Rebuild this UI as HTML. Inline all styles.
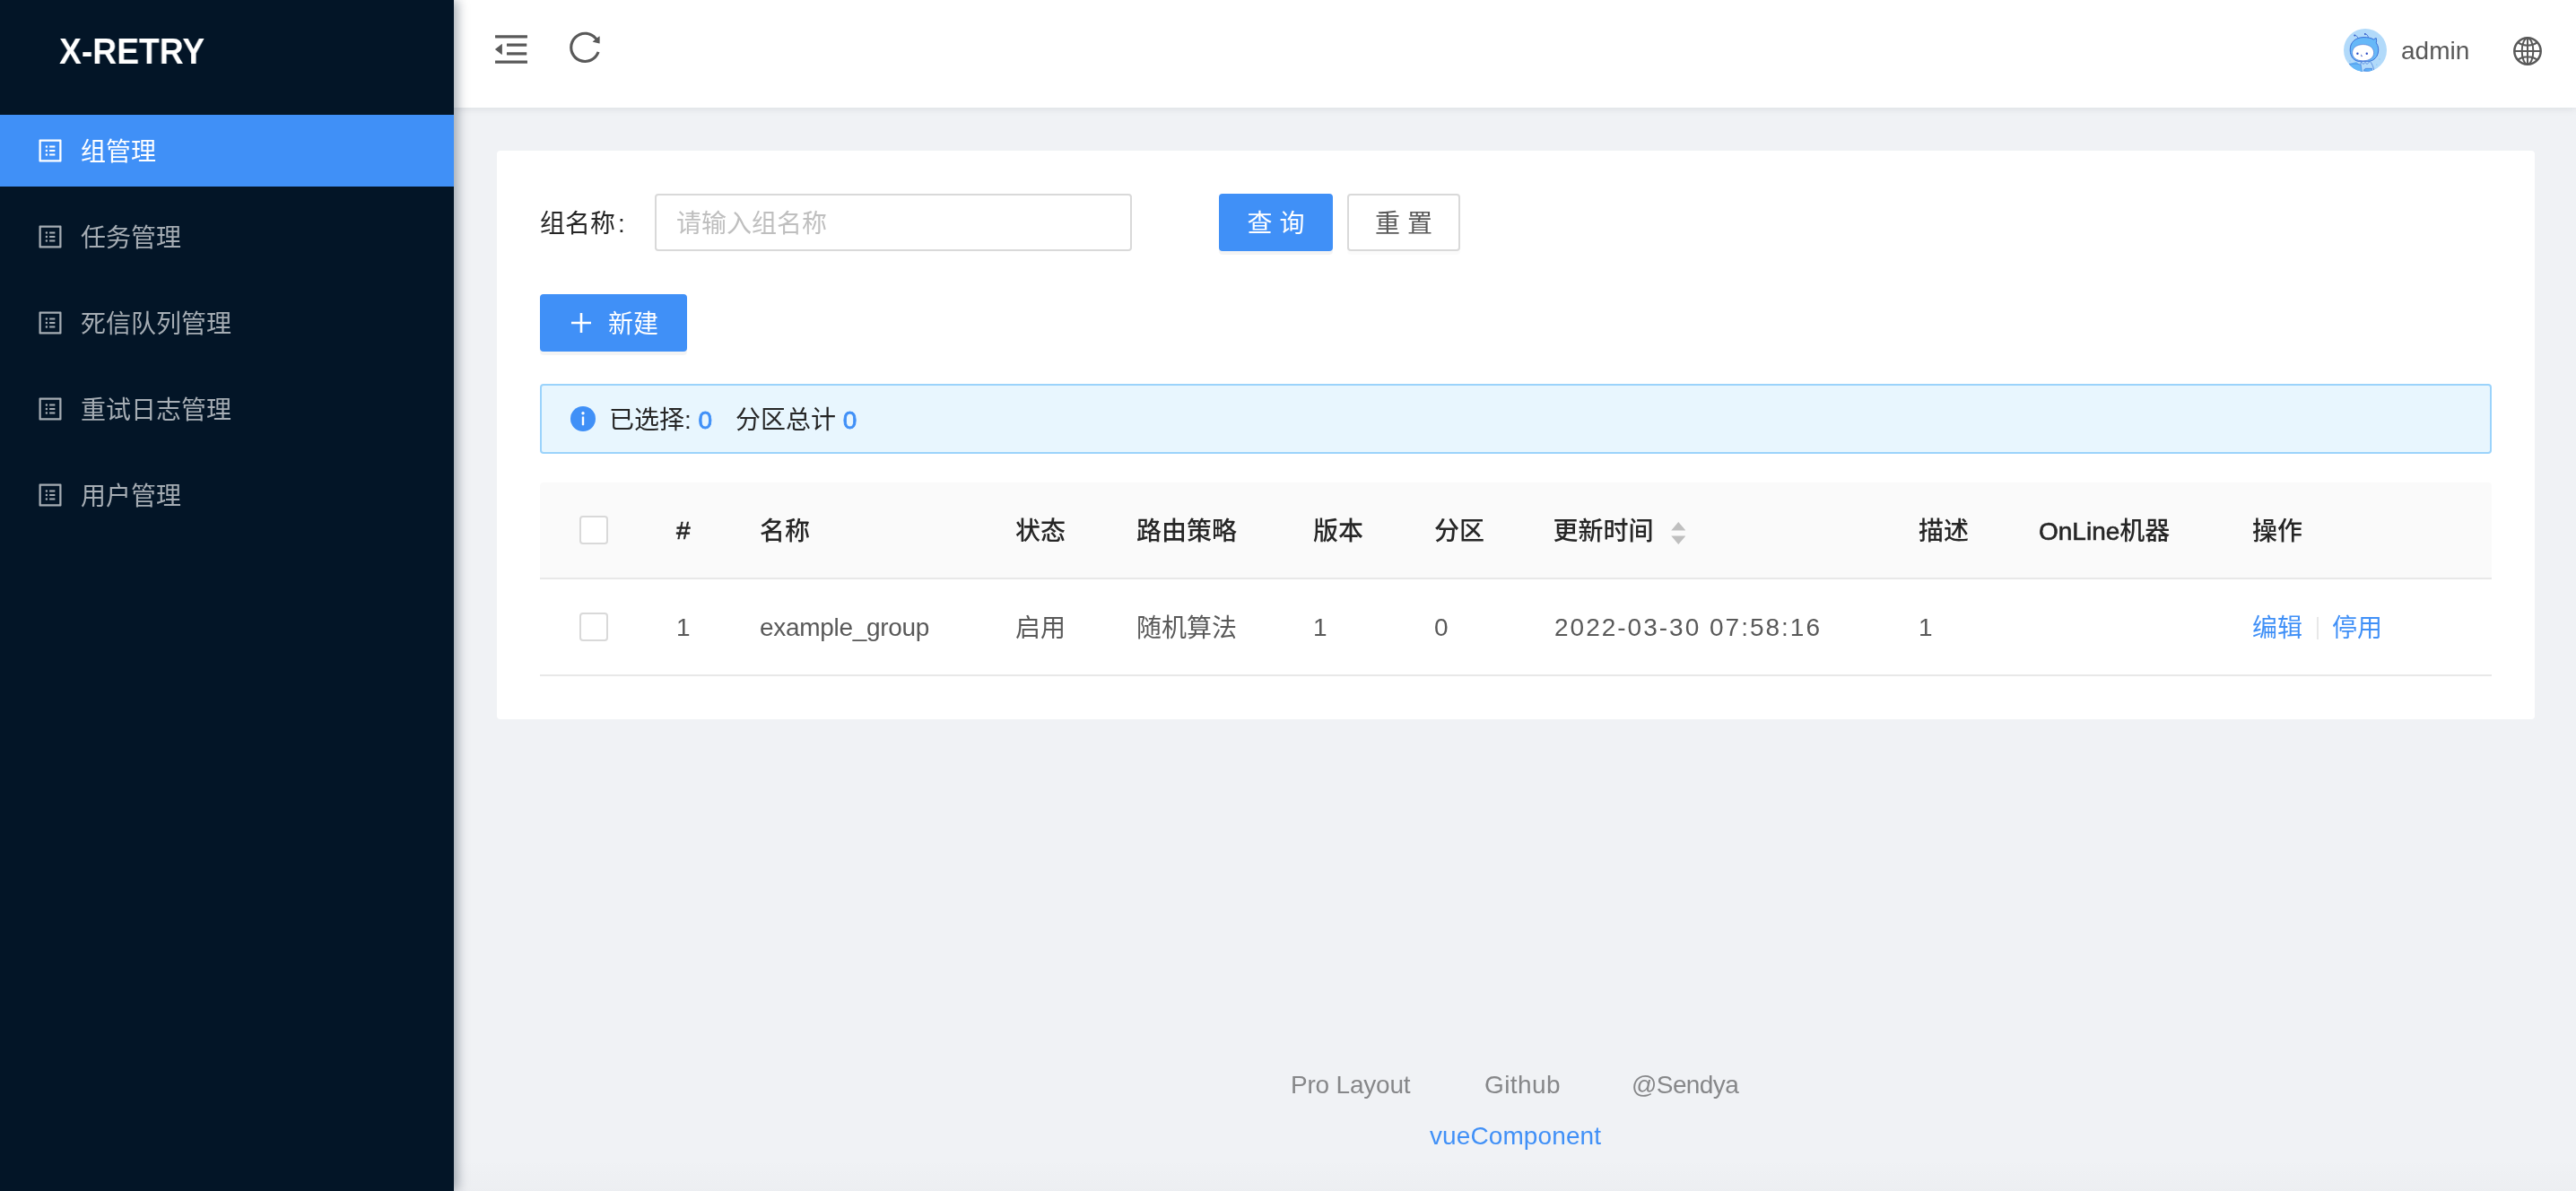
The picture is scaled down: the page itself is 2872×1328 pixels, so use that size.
<!DOCTYPE html>
<html lang="zh-CN">
<head>
<meta charset="utf-8">
<title>X-RETRY</title>
<style>
*{box-sizing:border-box;margin:0;padding:0}
html,body{width:2872px;height:1328px;overflow:hidden}
body{position:relative;background:#f0f2f5;font-family:"Liberation Sans","Noto Sans CJK SC",sans-serif;font-size:28px;color:#595959;line-height:44px}
a{text-decoration:none;color:#4090f7}
svg{display:block}
.abs{position:absolute}

/* sidebar */
.sider{position:absolute;left:0;top:0;width:506px;height:1328px;background:#031527;box-shadow:4px 0 12px rgba(0,21,41,.35);z-index:10}
.logo{position:absolute;left:66px;top:28.5px;height:56px;line-height:56px;font-size:40px;font-weight:700;color:#fff;white-space:nowrap;transform:scaleX(.931);transform-origin:0 50%}
.menu{position:absolute;left:0;top:128px;width:506px;list-style:none}
.menu li{position:relative;height:80px;margin-bottom:16px;line-height:80px;color:#a6adb4;white-space:nowrap}
.menu li.on{background:#4090f7;color:#fff}
.menu li svg{position:absolute;left:40px;top:24px;width:32px;height:32px;fill:currentColor}
.menu li span{position:absolute;left:90px;top:2px}

/* header */
.header{position:absolute;left:506px;top:0;width:2366px;height:120px;background:#fff;box-shadow:0 2px 8px rgba(0,21,41,.08);z-index:5}
.header svg{position:absolute;fill:#595959}
.uname{position:absolute;left:2171px;top:35px;line-height:44px;color:#595959;white-space:nowrap}

/* card */
.card{position:absolute;left:554px;top:168px;width:2272px;height:634px;background:#fff;border-radius:4px}
.lbl{position:absolute;left:48px;top:60px;line-height:44px;color:#262626;white-space:nowrap}
.lbl i{font-style:normal;margin-left:3px}
.ipt{position:absolute;left:176px;top:48px;width:532px;height:64px;border:2px solid #d9d9d9;border-radius:4px;background:#fff;padding:3px 22px 0;line-height:57px;color:#bfbfbf;white-space:nowrap}
.btn{position:absolute;height:64px;border-radius:4px;padding-top:3px;line-height:57px;text-align:center;white-space:nowrap;border:2px solid #d9d9d9;background:#fff;color:#595959;box-shadow:0 4px 0 rgba(0,0,0,.015)}
.btn.pri{background:#4090f7;border-color:#4090f7;color:#fff;box-shadow:0 4px 0 rgba(0,0,0,.045)}
.alert{position:absolute;left:48px;top:260px;width:2176px;height:78px;border:2px solid #9bd3fb;background:#e8f6fe;border-radius:4px;color:#262626;white-space:nowrap}
.alert svg{position:absolute;left:32px;top:23px}
.alert .t{position:absolute;top:17px;line-height:44px}
.alert a{font-weight:400;-webkit-text-stroke:.8px #4090f7}

/* table */
.tbl{position:absolute;left:48px;top:370px;width:2176px;border-collapse:separate;border-spacing:0;table-layout:fixed}
.tbl th,.tbl td{height:108px;padding:4px 32px 0;text-align:left;vertical-align:middle;border-bottom:2px solid #e8e8e8;white-space:nowrap;font-weight:400}
.tbl th{background:#fafafa;color:#262626;font-weight:500}
.tbl th b{font-weight:400;-webkit-text-stroke:.6px #262626}
.tbl th:first-child{border-top-left-radius:4px}
.tbl th:last-child{border-top-right-radius:4px}
.tbl td{color:#595959}
.tbl .c{padding-top:0}
.tbl .l{padding-top:2px}
.cb{display:block;width:32px;height:32px;border:2px solid #d9d9d9;border-radius:4px;background:#fff;margin-left:12px}
.sorter{display:inline-block;vertical-align:middle;margin-left:19px;margin-top:-1px}
.dvd{display:inline-block;width:2px;height:25px;background:#e8e8e8;vertical-align:middle;margin:0 15px 0 16px;position:relative;top:-2px}

/* footer */
.footer{position:absolute;left:506px;top:1188px;width:2366px;height:120px;color:#868789;white-space:nowrap}
.footer span,.footer a{position:absolute;line-height:44px}
/* force grayscale text antialiasing */
.uname,.tbl,.footer span,.footer a,.lbl,.ipt,.btn,.alert,.logo,.menu li span{will-change:transform}
</style>
</head>
<body>

<div class="sider">
  <div class="logo">X-RETRY</div>
  <ul class="menu">
    <li class="on"><svg viewBox="0 0 1024 1024"><use href="#i-profile"/></svg><span>组管理</span></li>
    <li><svg viewBox="0 0 1024 1024"><use href="#i-profile"/></svg><span>任务管理</span></li>
    <li><svg viewBox="0 0 1024 1024"><use href="#i-profile"/></svg><span>死信队列管理</span></li>
    <li><svg viewBox="0 0 1024 1024"><use href="#i-profile"/></svg><span>重试日志管理</span></li>
    <li><svg viewBox="0 0 1024 1024"><use href="#i-profile"/></svg><span>用户管理</span></li>
  </ul>
</div>

<div class="header">
  <svg viewBox="0 0 1024 1024" style="left:41px;top:32px;width:46px;height:46px"><path d="M408 442h480c4.400 0 8-3.600 8-8v-56c0-4.400-3.600-8-8-8H408c-4.400 0-8 3.600-8 8v56c0 4.400 3.600 8 8 8zm-8 204c0 4.400 3.600 8 8 8h480c4.400 0 8-3.600 8-8v-56c0-4.400-3.600-8-8-8H408c-4.400 0-8 3.600-8 8v56zm504-486H120c-4.400 0-8 3.600-8 8v56c0 4.400 3.600 8 8 8h784c4.400 0 8-3.600 8-8v-56c0-4.400-3.600-8-8-8zm0 632H120c-4.400 0-8 3.600-8 8v56c0 4.400 3.600 8 8 8h784c4.400 0 8-3.600 8-8v-56c0-4.400-3.600-8-8-8zM115.400 518.900L271.700 642c5.800 4.600 14.400.5 14.400-6.900V388.900c0-7.400-8.500-11.500-14.400-6.900L115.400 505.100a8.740 8.740 0 0 0 0 13.800z"/></svg>
  <svg viewBox="0 0 1024 1024" style="left:125px;top:32.400px;width:41.800px;height:41.800px"><path d="M909.100 209.300l-56.400 44.100C775.800 155.100 656.200 92 521.900 92 290 92 102.300 279.500 102 511.500 101.700 743.700 289.800 932 521.900 932c181.300 0 335.800-115 394.600-276.100 1.500-4.200-.7-8.900-4.900-10.300l-56.700-19.500a8 8 0 0 0-10.100 4.800c-1.800 5-3.800 10-5.900 14.900-17.300 41-42.100 77.800-73.700 109.400A344.770 344.770 0 0 1 655.900 829c-42.300 17.900-87.400 27-133.800 27-46.500 0-91.500-9.100-133.800-27A341.500 341.500 0 0 1 279 755.200a342.160 342.160 0 0 1-73.700-109.400c-17.900-42.400-27-87.400-27-133.900s9.100-91.500 27-133.900c17.300-41 42.100-77.800 73.700-109.400 31.600-31.600 68.400-56.400 109.300-73.800 42.300-17.900 87.400-27 133.800-27 46.500 0 91.500 9.100 133.800 27a341.500 341.500 0 0 1 109.300 73.800c9.900 9.900 19.200 20.400 27.800 31.400l-60.200 47a8 8 0 0 0 3 14.100l175.600 43c5 1.200 9.900-2.600 9.900-7.700l.8-180.900c-.1-6.600-7.800-10.300-13-6.200z"/></svg>
  <svg viewBox="0 0 48 48" style="left:2107px;top:32px;width:48px;height:48px">
    <defs><clipPath id="avc"><circle cx="24" cy="24" r="24"/></clipPath></defs>
    <g clip-path="url(#avc)">
      <rect width="48" height="48" fill="#b2dafa"/>
      <path d="M16.300 11.500C15.600 8.500 14 7.300 12.200 7.400M27.600 10.600C27.300 7.400 25.800 5.900 23.700 5.900" fill="none" stroke="#3f6fd6" stroke-width="0.900" stroke-linecap="round"/>
      <circle cx="12.300" cy="7.500" r="0.900" fill="#2f55c8"/><circle cx="23.800" cy="5.900" r="0.900" fill="#2f55c8"/>
      <path d="M7.200 24C7 15 13 9.800 22 9.600c4.500-.1 8.500.6 11.500 2.400 1-.9 2-1.400 2.800-1.400 .4 2 .4 3.600 0 5.200C38.600 19.300 39.300 23 38.300 27c-1 4.500-4 8-9.300 9.300H16C10.500 35 7.400 30.500 7.200 24z" fill="#66b8f8" stroke="#3b6fd6" stroke-width="1"/>
      <path d="M14 37l-8 2.200L14 48h14z" fill="#66b8f8"/>
      <path d="M19.500 36.500c-1 4-1 8 .5 12h14c-.5-5-2-9-4.500-12z" fill="#b2dafa" stroke="#3f74d8" stroke-width="0.700"/>
      <path d="M19.500 37l2.500 2.600 2-2.200 2 2.200 2.600-2.600" fill="none" stroke="#3f74d8" stroke-width="0.700"/>
      <path d="M6 39.200h9l4 1 1.500 7.800H13z" fill="#66b8f8" stroke="#3f74d8" stroke-width="0.500"/>
      <path d="M22.500 47c.3-1.800 1.200-2.600 2.500-2.700h6.500v3.700z" fill="#5aaef6" stroke="#3f74d8" stroke-width="0.600"/>
      <path d="M21.600 17.600c7.200 0 12 3.800 12 9.200 0 5.600-4.800 9-12 9s-12-3.400-12-9c0-5.400 4.800-9.200 12-9.200z" fill="#fff" stroke="#4a78d6" stroke-width="0.700"/>
      <circle cx="15.400" cy="27.700" r="1.200" fill="#2e4fc6"/><circle cx="25.800" cy="27.700" r="1.200" fill="#2e4fc6"/>
      <path d="M19.600 28.800v1.800h1.400" fill="none" stroke="#2e4fc6" stroke-width="0.700"/>
      <circle cx="7" cy="36" r="0.800" fill="#8ccbfa"/><circle cx="40" cy="34" r="0.800" fill="#8ccbfa"/><circle cx="36.800" cy="40.300" r="0.800" fill="#8ccbfa"/>
    </g>
  </svg>
  <svg viewBox="0 0 36 36" style="left:2294px;top:39px;width:36px;height:36px;fill:none;stroke:#595959;stroke-width:2">
    <circle cx="18" cy="18" r="14.700" stroke-width="2.500"/>
    <ellipse cx="18" cy="18" rx="6.300" ry="14.600"/>
    <path d="M18 3.400v29.200M3.400 18h29.200M7.200 8.400c6.400 4.400 15.200 4.400 21.600 0M7.200 27.600c6.400-4.400 15.200-4.400 21.600 0"/>
  </svg>
  <span class="uname">admin</span>
</div>

<div class="card">
  <span class="lbl">组名称<i>:</i></span>
  <div class="ipt">请输入组名称</div>
  <div class="btn pri" style="left:805px;top:48px;width:127px">查 询</div>
  <div class="btn" style="left:948px;top:48px;width:126px">重 置</div>
  <div class="btn pri" style="left:48px;top:160px;width:164px;text-align:left"><svg viewBox="0 0 22 22" width="22" height="22" style="position:absolute;left:33px;top:19px"><path d="M11 0v22M0 11h22" stroke="#fff" stroke-width="2.600" fill="none"/></svg><span style="position:absolute;left:74px">新建</span></div>
  <div class="alert">
    <svg viewBox="0 0 28 28" width="28" height="28"><circle cx="14" cy="14" r="14" fill="#4090f7"/><circle cx="14" cy="7.800" r="1.700" fill="#fff"/><rect x="12.800" y="11.400" width="2.400" height="9.800" rx="0.400" fill="#fff"/></svg>
    <span class="t" style="left:75px">已选择: <a>0</a></span>
    <span class="t" style="left:216px">分区总计 <a>0</a></span>
  </div>
  <table class="tbl">
    <colgroup><col style="width:120px"><col style="width:93px"><col style="width:285px"><col style="width:135px"><col style="width:197px"><col style="width:135px"><col style="width:134px"><col style="width:406px"><col style="width:134px"><col style="width:238px"><col style="width:299px"></colgroup>
    <thead><tr>
      <th class="c"><i class="cb"></i></th><th class="l"><b>#</b></th><th>名称</th><th>状态</th><th>路由策略</th><th>版本</th><th>分区</th>
      <th style="text-indent:-1.500px">更新时间<svg class="sorter" viewBox="0 0 16.500 25" width="16.500" height="25"><path d="M8.250 0l8 9.400H.25zM8.250 25L.25 15.600h16z" fill="#bfbfbf"/></svg></th>
      <th>描述</th><th><b>OnLine</b>机器</th><th>操作</th>
    </tr></thead>
    <tbody><tr>
      <td class="c"><i class="cb"></i></td><td class="l">1</td><td class="l" style="letter-spacing:-0.3px">example_group</td><td>启用</td><td>随机算法</td><td class="l">1</td><td class="l">0</td><td class="l" style="letter-spacing:2px">2022-03-30 07:58:16</td><td class="l">1</td><td></td>
      <td><a>编辑</a><i class="dvd"></i><a>停用</a></td>
    </tr></tbody>
  </table>
</div>

<div class="abs" style="left:506px;top:1292px;width:2366px;height:36px;background:linear-gradient(rgba(0,0,20,0),rgba(0,0,20,.014))"></div>

<div class="footer">
  <span style="left:933px;top:0;letter-spacing:-0.2px">Pro Layout</span><span style="left:1148.500px;top:0;letter-spacing:0.4px">Github</span><span style="left:1313px;top:0;letter-spacing:-0.6px">@Sendya</span>
  <a style="left:1088px;top:57px;letter-spacing:0.1px">vueComponent</a>
</div>

<svg width="0" height="0" style="position:absolute">
  <defs>
    <path id="i-profile" d="M880 112H144c-17.700 0-32 14.300-32 32v736c0 17.700 14.300 32 32 32h736c17.700 0 32-14.300 32-32V144c0-17.700-14.300-32-32-32zm-40 728H184V184h656v656zM492 400h184c4.400 0 8-3.600 8-8v-48c0-4.400-3.600-8-8-8H492c-4.400 0-8 3.600-8 8v48c0 4.400 3.600 8 8 8zm0 144h184c4.400 0 8-3.600 8-8v-48c0-4.400-3.600-8-8-8H492c-4.400 0-8 3.600-8 8v48c0 4.400 3.600 8 8 8zm0 144h184c4.400 0 8-3.600 8-8v-48c0-4.400-3.600-8-8-8H492c-4.400 0-8 3.600-8 8v48c0 4.400 3.600 8 8 8zM340 368a40 40 0 1 0 80 0 40 40 0 1 0-80 0zm0 144a40 40 0 1 0 80 0 40 40 0 1 0-80 0zm0 144a40 40 0 1 0 80 0 40 40 0 1 0-80 0z"/>
  </defs>
</svg>
</body>
</html>
